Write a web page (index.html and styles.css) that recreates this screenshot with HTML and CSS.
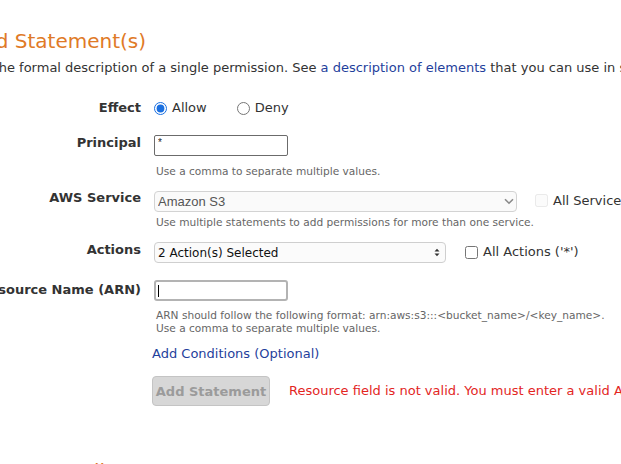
FILE: index.html
```html
<!DOCTYPE html>
<html lang="en">
<head>
<meta charset="utf-8">
<title>Add Statement(s)</title>
<link rel="stylesheet" href="styles.css">
</head>
<body>
<div class="page">
  <h2 class="step-title step2">Step 2: Add Statement(s)</h2>
  <p class="intro">A statement is the formal description of a single permission. See <a href="#">a description of elements</a> that you can use in statements.</p>

  <form class="form">
    <div class="row row-effect">
      <div class="label">Effect</div>
      <div class="field radios">
        <label class="choice"><input type="radio" name="effect" checked><span>Allow</span></label>
        <label class="choice deny"><input type="radio" name="effect"><span>Deny</span></label>
      </div>
    </div>

    <div class="row row-principal">
      <div class="label">Principal</div>
      <div class="field">
        <input class="text-input principal" type="text" value="*">
      </div>
    </div>
    <div class="help help-principal">Use a comma to separate multiple values.</div>

    <div class="row row-service">
      <div class="label">AWS Service</div>
      <div class="field inline">
        <span class="select-wrap service">
          <select class="select service-select" disabled><option>Amazon S3</option></select>
          <svg class="chev" width="10" height="7" viewBox="0 0 10 7"><path d="M1 1.2 L5 5.2 L9 1.2" fill="none" stroke="#8a8a8a" stroke-width="1.6"/></svg>
        </span>
        <label class="choice check disabled"><input type="checkbox" disabled><span>All Services ('*')</span></label>
      </div>
    </div>
    <div class="help help-service">Use multiple statements to add permissions for more than one service.</div>

    <div class="row row-actions">
      <div class="label">Actions</div>
      <div class="field inline">
        <span class="select-wrap actions">
          <select class="select actions-select"><option>2 Action(s) Selected</option></select>
          <svg class="updown" width="6" height="9" viewBox="0 0 6 9"><path d="M0.5 3.6 L3 0.8 L5.5 3.6 Z M0.5 5.4 L3 8.2 L5.5 5.4 Z" fill="#333"/></svg>
        </span>
        <label class="choice check"><input type="checkbox"><span>All Actions ('*')</span></label>
      </div>
    </div>

    <div class="row row-arn">
      <div class="label label-arn">Amazon Resource Name (ARN)</div>
      <div class="field">
        <span class="input-wrap">
          <input class="text-input arn" type="text" value="">
          <span class="caret"></span>
        </span>
      </div>
    </div>
    <div class="help help-arn">ARN should follow the following format: arn:aws:s3:::&lt;bucket_name&gt;/&lt;key_name&gt;.<br>Use a comma to separate multiple values.</div>

    <div class="conditions"><a href="#">Add Conditions (Optional)</a></div>

    <div class="submit-row">
      <button type="button" class="btn" disabled>Add Statement</button>
      <span class="error">Resource field is not valid. You must enter a valid ARN.</span>
    </div>
  </form>

  <h2 class="step-title step3">Step 3: Generate Policy</h2>
</div>
</body>
</html>
```

FILE: styles.css
```css
html, body {
  margin: 0;
  padding: 0;
  overflow: hidden;
  background: #ffffff;
}

body {
  width: 621px;
  height: 464px;
  font-family: "DejaVu Sans", Verdana, sans-serif;
  color: #333333;
}

.page {
  margin-left: -105px;
  width: 1000px;
}

.step-title {
  margin: 0;
  font-size: 20px;
  line-height: 24px;
  font-weight: normal;
  color: #df7a27;
  white-space: nowrap;
}

.step2 {
  padding-top: 29px;
  text-indent: -3px;
}

.step3 {
  margin-top: 53px;
  text-indent: -2px;
}

.intro {
  margin: 6px 0 0 0;
  font-size: 13px;
  line-height: 18px;
  white-space: nowrap;
  color: #333333;
}

a {
  color: #1f3f9c;
  text-decoration: none;
}

.form {
  margin: 0;
}

.row {
  display: flex;
  align-items: flex-start;
}

.label {
  width: 246px;
  margin-right: 13px;
  flex: none;
  text-align: right;
  font-size: 13px;
  line-height: 18px;
  font-weight: bold;
  color: #333333;
  white-space: nowrap;
}

.field {
  font-size: 13px;
  line-height: 18px;
  white-space: nowrap;
}

.inline {
  display: flex;
  align-items: center;
}

.row-effect { margin-top: 22px; }
.row-principal { margin-top: 17px; }
.row-service { margin-top: 11px; }
.row-actions { margin-top: 12px; }
.row-arn { margin-top: 17px; }
.label-arn { padding-top: 1px; }

.radios {
  display: flex;
  align-items: center;
  height: 18px;
}

.choice {
  display: inline-flex;
  align-items: center;
  font-size: 13px;
  color: #333333;
}

.choice input {
  margin: 0 5px 0 0;
  width: 13px;
  height: 13px;
  accent-color: #1a6fe0;
}

.deny { margin-left: 30px; }

.text-input {
  box-sizing: border-box;
  display: block;
  width: 134px;
  height: 21px;
  margin: 1px 0 0 0;
  padding: 0 3px;
  font-family: "Liberation Sans", Arial, sans-serif;
  font-size: 12px;
  color: #222222;
  background: #ffffff;
  outline: none;
}

.principal {
  border: 1px solid #6b6b6b;
  border-radius: 2px;
  font-size: 10px;
  line-height: 12px;
  padding-bottom: 6px;
}

.input-wrap {
  position: relative;
  display: block;
}

.arn {
  margin-top: 0;
  border: 2px solid #b3b3b3;
  border-radius: 3px;
}

.caret {
  position: absolute;
  left: 4px;
  top: 5px;
  width: 1px;
  height: 12px;
  background: #000000;
}

.help {
  margin-left: 261px;
  font-size: 10.6px;
  line-height: 14px;
  color: #666666;
  white-space: nowrap;
}

.help-principal { margin-top: 8px; }
.help-service { margin-top: 3px; }
.help-arn {
  margin-top: 8px;
  line-height: 13px;
}

.select-wrap {
  position: relative;
  display: block;
  margin-top: 2px;
}

.select {
  -webkit-appearance: none;
  appearance: none;
  box-sizing: border-box;
  display: block;
  height: 21px;
  margin: 0;
  border: 1px solid #d3d3d3;
  border-radius: 4px;
  font-size: 13px;
  outline: none;
}

.service-select {
  width: 363px;
  padding: 0 0 0 3px;
  background: #fafafa;
  color: #555555;
  font-family: "Liberation Sans", Arial, sans-serif;
  opacity: 1;
}

.actions { margin-top: 1px; }

.actions-select {
  width: 292px;
  padding: 0 0 0 3px;
  background: #fbfbfb;
  color: #111111;
  font-family: "DejaVu Sans", Verdana, sans-serif;
  font-size: 12px;
  border-color: #cfcfcf;
}

.chev {
  position: absolute;
  left: 350px;
  top: 7px;
}

.updown {
  position: absolute;
  left: 280px;
  top: 6px;
}

.service + .check { margin-left: 18px; }
.actions + .check { margin-left: 19px; }

.check.disabled input {
  opacity: 0.45;
}

.conditions {
  margin: 10px 0 0 257px;
  font-size: 13px;
  line-height: 18px;
}

.submit-row {
  display: flex;
  align-items: center;
  margin: 13px 0 0 257px;
}

.btn {
  box-sizing: border-box;
  width: 118px;
  height: 30px;
  margin: 0;
  padding: 0;
  border: 1px solid #c4c4c4;
  border-radius: 4px;
  background: #d7d7d7;
  color: #9b9b9b;
  font-family: "DejaVu Sans", Verdana, sans-serif;
  font-size: 13px;
  font-weight: bold;
}

.error {
  margin-left: 19px;
  font-size: 13px;
  line-height: 18px;
  color: #e3261f;
  white-space: nowrap;
}
```
